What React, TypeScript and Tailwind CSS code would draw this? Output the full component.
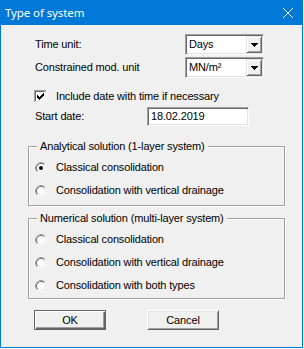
import React from "react";

const sunken =
  "border border-t-[#a0a0a0] border-l-[#a0a0a0] border-r-white border-b-white shadow-[inset_1px_1px_0_#696969,inset_-1px_-1px_0_#e3e3e3]";

function Arrow() {
  return (
    <svg width="7" height="4" viewBox="0 0 7 4">
      <path d="M0 0h7v1H0z M1 1h5v1H1z M2 2h3v1H2z M3 3h1v1H3z" fill="#000" />
    </svg>
  );
}

function Combo({ value }: { value: string }) {
  return (
    <div className={`flex h-[21px] w-[79px] bg-white p-[1px] ${sunken}`}>
      <div className="flex flex-1 items-center pl-[2px]">{value}</div>
      <div className="flex w-[16px] items-center justify-center border border-t-[#e3e3e3] border-l-[#e3e3e3] border-r-[#696969] border-b-[#696969] bg-[#f0f0f0] shadow-[inset_1px_1px_0_#fff,inset_-1px_-1px_0_#a0a0a0]">
        <Arrow />
      </div>
    </div>
  );
}

function Checkbox() {
  return (
    <svg width="13" height="13" viewBox="0 0 13 13" shapeRendering="crispEdges">
      <rect x="0" y="0" width="13" height="13" fill="#fff" />
      <path d="M0 0h12v1H1v11H0z" fill="#a0a0a0" />
      <path d="M1 1h10v1H2v9H1z" fill="#696969" />
      <path d="M12 0h1v13H0v-1h12z" fill="#fff" />
      <path d="M11 1h1v11H1v-1h10z" fill="#e3e3e3" />
      <path
        d="M9 3h1v3H9v1H8v1H7v1H6v1H5V9H4V8H3V5h1v1h1v1h1V6h1V5h1V4h1z"
        fill="#000"
      />
    </svg>
  );
}

function Radio({ checked }: { checked?: boolean }) {
  return (
    <svg width="12" height="12" viewBox="0 0 12 12">
      <circle cx="6" cy="6" r="5" fill="#fff" />
      <path d="M2.11 9.89 A5.5 5.5 0 0 1 9.89 2.11" fill="none" stroke="#a0a0a0" strokeWidth="1" />
      <path d="M9.89 2.11 A5.5 5.5 0 0 1 2.11 9.89" fill="none" stroke="#fff" strokeWidth="1" />
      <path d="M2.82 9.18 A4.5 4.5 0 0 1 9.18 2.82" fill="none" stroke="#696969" strokeWidth="1" />
      <path d="M9.18 2.82 A4.5 4.5 0 0 1 2.82 9.18" fill="none" stroke="#e3e3e3" strokeWidth="1" />
      {checked && <circle cx="6" cy="6" r="2" fill="#000" />}
    </svg>
  );
}

function Option({ label, checked }: { label: string; checked?: boolean }) {
  return (
    <div className="flex h-[23px] items-center gap-[9px] pl-[6px]">
      <Radio checked={checked} />
      <span>{label}</span>
    </div>
  );
}

function Group({ title, children, className }: { title: string; children: React.ReactNode; className?: string }) {
  return (
    <fieldset
      className={`w-[257px] border border-[#a0a0a0] shadow-[inset_1px_1px_0_#fff,1px_1px_0_#fff] ${className ?? ""}`}
    >
      <legend className="ml-[8px] bg-[#f0f0f0] px-[3px] leading-[14px]">{title}</legend>
      {children}
    </fieldset>
  );
}

export default function App() {
  return (
    <div className="h-[349px] w-[304px] bg-white">
      <div className="flex h-[348px] w-[303px] flex-col border-x border-b border-[#0078d7] bg-[#f0f0f0] font-['Liberation_Sans',Arial,sans-serif] text-[11px] tracking-[-0.15px] text-black">
        <div className="flex h-[25px] items-center justify-between bg-[#0078d7] pl-[4px] pr-[9px] font-['Noto_Sans',sans-serif] text-[11.5px] tracking-[-0.1px] text-white">
          <span>Type of system</span>
          <svg width="10" height="10" viewBox="0 0 10 10">
            <path d="M0 0L10 10M10 0L0 10" stroke="#fff" strokeWidth="1" />
          </svg>
        </div>

        <div className="flex flex-col pl-[27px]">
          <div className="mt-[9px] flex h-[21px] items-center">
            <span className="w-[157px] pl-[7px]">Time unit:</span>
            <Combo value="Days" />
          </div>
          <div className="mt-[2px] flex h-[21px] items-center">
            <span className="w-[157px] pl-[7px]">Constrained mod. unit</span>
            <Combo value="MN/m²" />
          </div>

          <div className="mt-[12px] flex h-[13px] items-center gap-[9px] pl-[6px]">
            <Checkbox />
            <span>Include date with time if necessary</span>
          </div>

          <div className="mt-[4px] flex h-[19px] items-center">
            <span className="w-[119px] pl-[7px]">Start date:</span>
            <div className={`flex h-[19px] w-[102px] items-center bg-white pl-[3px] ${sunken}`}>18.02.2019</div>
          </div>

          <Group title="Analytical solution (1-layer system)" className="mt-[13px] pb-[3px] pt-[3px]">
            <Option label="Classical consolidation" checked />
            <Option label="Consolidation with vertical drainage" />
          </Group>

          <Group title="Numerical solution (multi-layer system)" className="mt-[5px] pb-[1px] pt-[3px]">
            <Option label="Classical consolidation" />
            <Option label="Consolidation with vertical drainage" />
            <Option label="Consolidation with both types" />
          </Group>

          <div className="mt-[11px] flex gap-[41px] pl-[6px]">
            <button className="h-[20px] w-[72px] border border-[#646464] bg-[#f0f0f0] shadow-[inset_1px_1px_0_#fff,inset_-1px_-1px_0_#646464,inset_-2px_-2px_0_#a0a0a0]">
              OK
            </button>
            <button className="h-[20px] w-[72px] border border-t-white border-l-white border-r-[#646464] border-b-[#646464] bg-[#f0f0f0] shadow-[inset_1px_1px_0_#e3e3e3,inset_-1px_-1px_0_#a0a0a0]">
              Cancel
            </button>
          </div>
        </div>
      </div>
    </div>
  );
}
